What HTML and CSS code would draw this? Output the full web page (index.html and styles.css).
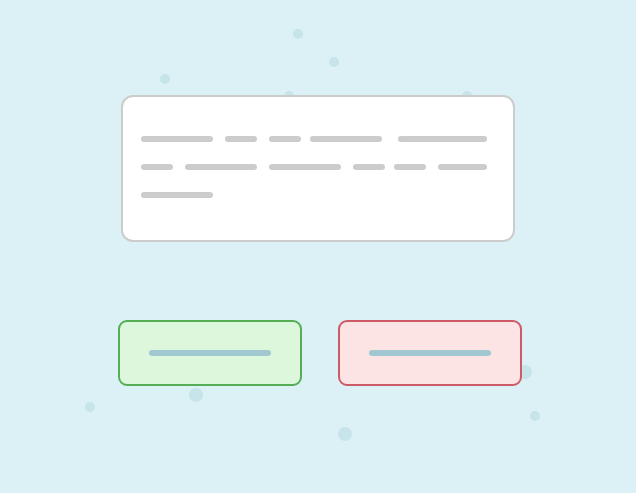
FILE: index.html
```html
<!DOCTYPE html>
<html lang="en">
<head>
  <meta charset="UTF-8">
  <meta name="viewport" content="width=device-width, initial-scale=1.0">
  <title>Confirm Dialog Sketch</title>
  <link rel="stylesheet" href="styles.css">
</head>
<body>
<div class="scene">
  <!-- background bubbles -->
  <svg class="bubbles" width="636" height="493" viewBox="0 0 636 493" aria-hidden="true">
    <circle cx="298" cy="34" r="5"/>
    <circle cx="334" cy="62" r="5"/>
    <circle cx="165" cy="79" r="5"/>
    <circle cx="289" cy="96" r="5"/>
    <circle cx="467" cy="96" r="5"/>
    <circle cx="90" cy="407" r="5"/>
    <circle cx="196" cy="395" r="7"/>
    <circle cx="345" cy="434" r="7"/>
    <circle cx="535" cy="416" r="5"/>
    <circle cx="525" cy="372" r="7"/>
  </svg>

  <div class="message card">
    <div class="line">
      <span class="bar w72"></span>
      <span class="bar w32 gap12"></span>
      <span class="bar w32 gap12"></span>
      <span class="bar w72 gap9"></span>
      <span class="bar w89 gap16"></span>
    </div>
    <div class="line">
      <span class="bar w32"></span>
      <span class="bar w72 gap12"></span>
      <span class="bar w72 gap12"></span>
      <span class="bar w32 gap12"></span>
      <span class="bar w32 gap9"></span>
      <span class="bar w49 gap12"></span>
    </div>
    <div class="line">
      <span class="bar w72"></span>
    </div>
  </div>

  <div class="actions">
    <button class="btn btn-ok"><span class="label"></span></button>
    <button class="btn btn-cancel"><span class="label"></span></button>
  </div>
</div>
</body>
</html>
```

FILE: styles.css
```css
body {
  margin: 0;
  background: #dbf1f6;
  font-family: "Liberation Sans", Arial, sans-serif;
  overflow: hidden;
}

.scene {
  position: relative;
  display: flow-root;
  width: 636px;
  height: 493px;
}

.bubbles {
  position: absolute;
  left: 0;
  top: 0;
}
.bubbles circle { fill: #c7e4ea; }

.card {
  position: relative;
  box-sizing: border-box;
  margin: 95px 0 0 121px;
  width: 394px;
  height: 147px;
  background: #fff;
  border: 2px solid #cccccc;
  border-radius: 12px;
  padding: 39px 0 0 18px;
}

.line {
  display: flex;
  height: 6px;
  margin-bottom: 22px;
}

.bar {
  display: block;
  height: 6px;
  border-radius: 3px;
  background: #cccccc;
}
.w32 { width: 32px; }
.w49 { width: 49px; }
.w72 { width: 72px; }
.w89 { width: 89px; }
.gap9 { margin-left: 9px; }
.gap12 { margin-left: 12px; }
.gap16 { margin-left: 16px; }

.actions {
  position: relative;
  display: flex;
  gap: 36px;
  margin: 78px 0 0 118px;
}

.btn {
  box-sizing: border-box;
  width: 184px;
  height: 66px;
  border-radius: 9px;
  border: 2px solid;
  padding: 0;
  display: flex;
  align-items: center;
  justify-content: center;
  cursor: pointer;
}
.btn-ok {
  background: #ddf7dc;
  border-color: #55ad55;
}
.btn-cancel {
  background: #fce3e4;
  border-color: #cc5b67;
}

.btn .label {
  display: block;
  width: 122px;
  height: 6px;
  border-radius: 3px;
  background: #a1c8d0;
}
```
